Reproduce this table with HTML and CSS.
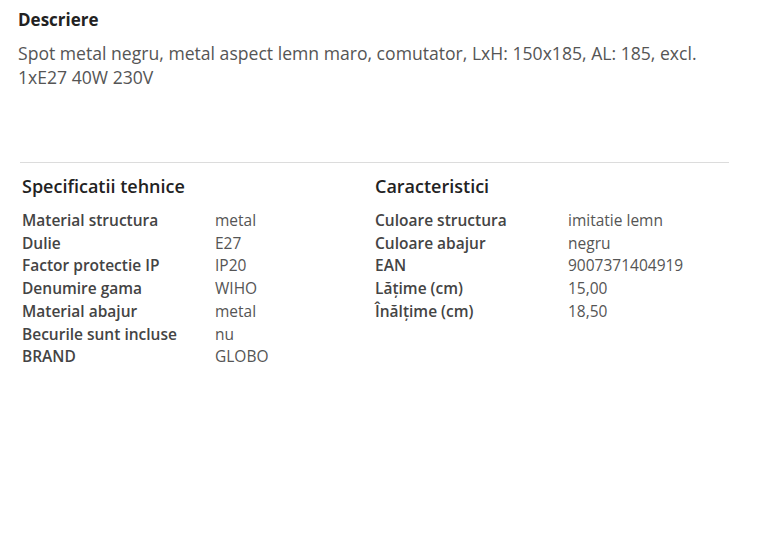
FILE: index.html
```html
<!DOCTYPE html>
<html lang="ro">
<head>
<meta charset="utf-8">
<link rel="stylesheet" href="styles.css">
</head>
<body>
<section class="desc">
  <h2 class="desc-title">Descriere</h2>
  <p class="desc-text">Spot metal negru, metal aspect lemn maro, comutator, LxH: 150x185, AL: 185, excl. 1xE27 40W 230V</p>
</section>
<section class="specs">
  <div class="col">
    <h3 class="col-title">Specificatii tehnice</h3>
    <dl class="table">
      <dt>Material structura</dt><dd>metal</dd>
      <dt>Dulie</dt><dd>E27</dd>
      <dt>Factor protectie IP</dt><dd>IP20</dd>
      <dt>Denumire gama</dt><dd>WIHO</dd>
      <dt>Material abajur</dt><dd>metal</dd>
      <dt>Becurile sunt incluse</dt><dd>nu</dd>
      <dt>BRAND</dt><dd>GLOBO</dd>
    </dl>
  </div>
  <div class="col">
    <h3 class="col-title">Caracteristici</h3>
    <dl class="table">
      <dt>Culoare structura</dt><dd>imitatie lemn</dd>
      <dt>Culoare abajur</dt><dd>negru</dd>
      <dt>EAN</dt><dd>9007371404919</dd>
      <dt>Lăţime (cm)</dt><dd>15,00</dd>
      <dt>Înălţime (cm)</dt><dd>18,50</dd>
    </dl>
  </div>
</section>
</body>
</html>
```
FILE: styles.css
```css
html, body {
  margin: 0;
  padding: 0;
  background: #fff;
}
body {
  font-family: "Open Sans", "Liberation Sans", sans-serif;
  color: #555;
}
.desc {
  padding: 8px 0 0 18px;
  height: 154px;
}
.desc-title {
  margin: 0;
  font-size: 17px;
  font-weight: 700;
  color: #222;
  line-height: 24px;
}
.desc-text {
  margin: 9px 0 0;
  font-size: 17.6px;
  line-height: 24px;
  color: #555;
  width: 705px;
}
.specs {
  margin: 0 34px 0 20px;
  border-top: 1px solid #dcdcdc;
  display: grid;
  grid-template-columns: 353px 1fr;
  padding-top: 11px;
}
.col {
  padding-left: 2px;
}
.col-title {
  margin: 0 0 11px;
  font-size: 18px;
  font-weight: 600;
  color: #222;
  line-height: 24px;
}
.table {
  margin: 0;
  display: grid;
  grid-template-columns: 193px 1fr;
  font-size: 15.5px;
  line-height: 22.7px;
}
.table dt {
  font-weight: 600;
  color: #444;
}
.table dd {
  margin: 0;
  color: #555;
}
```
